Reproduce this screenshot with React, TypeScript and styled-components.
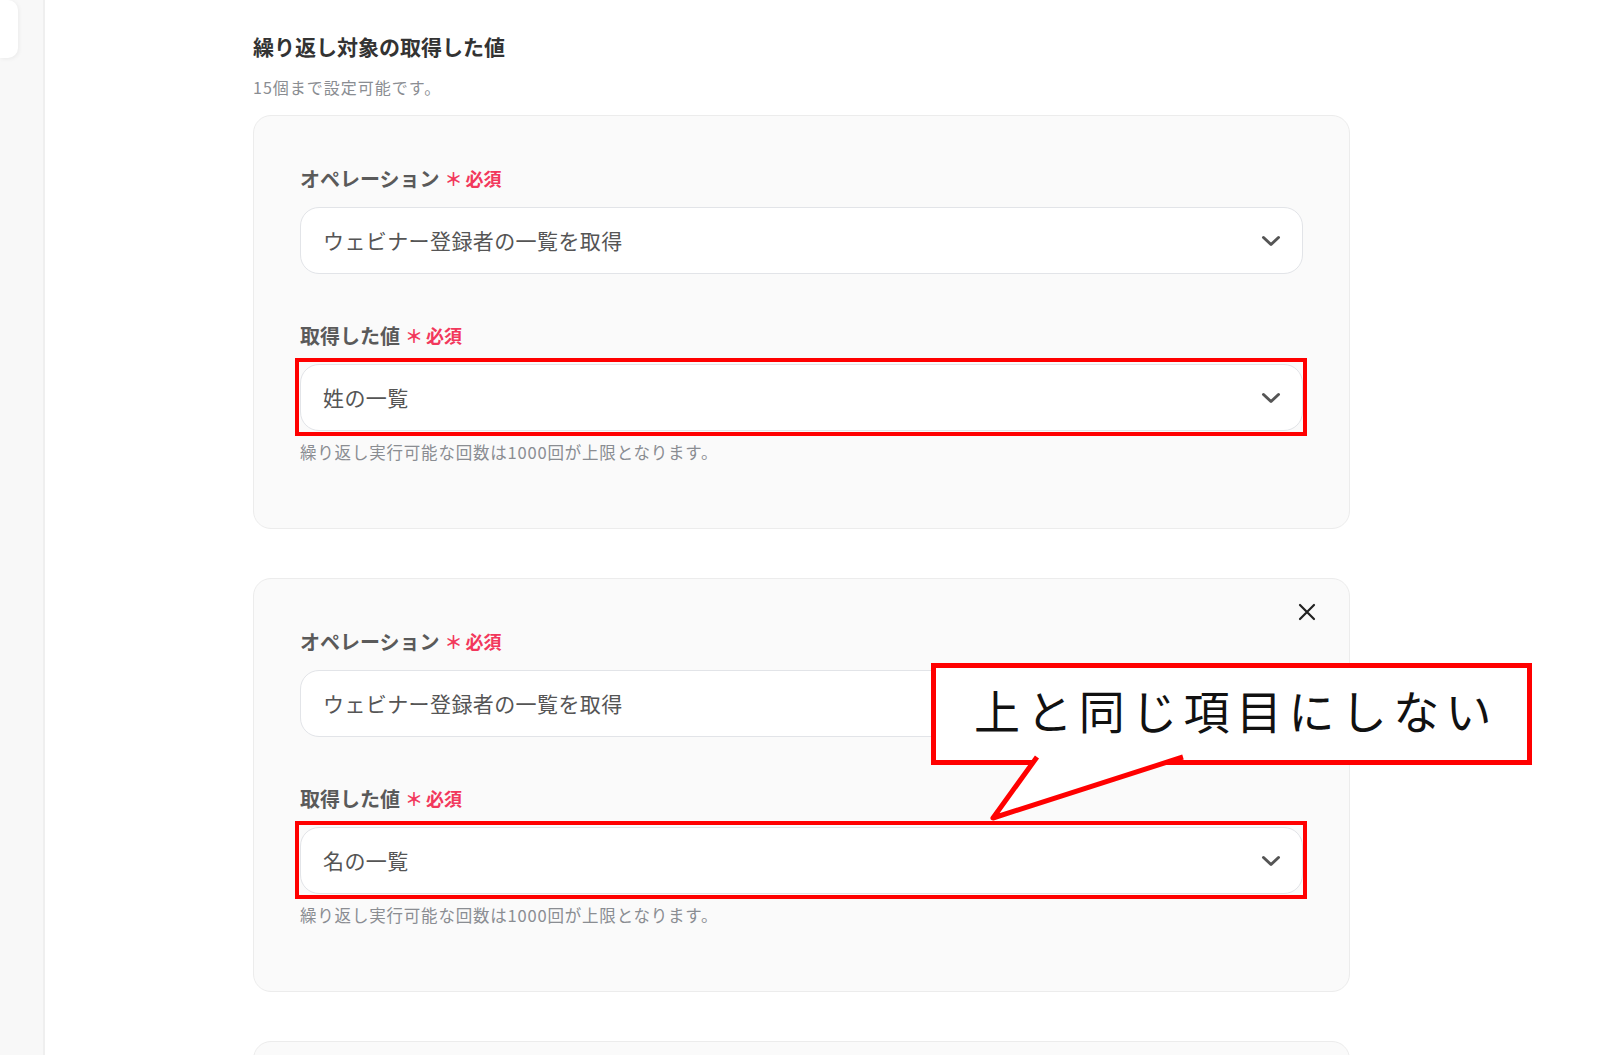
import React from "react";
import styled, { createGlobalStyle } from "styled-components";

const Global = createGlobalStyle`
  html, body { margin: 0; padding: 0; background: #ffffff; overflow: hidden; }
  body { font-family: "Noto Sans CJK JP", "Noto Sans", sans-serif; }
  * { box-sizing: border-box; }
`;

const Page = styled.div`
  display: flex;
  width: 1600px;
  height: 1055px;
  overflow: hidden;
`;

const Sidebar = styled.aside`
  flex: 0 0 45px;
  background: #f8f8f8;
  border-right: 2px solid #efefef;
`;

const SideTab = styled.div`
  width: 18px;
  height: 58px;
  background: #ffffff;
  border-radius: 0 10px 10px 0;
  box-shadow: 1px 1px 4px rgba(0, 0, 0, 0.06);
`;

const Main = styled.main`
  flex: 1;
  padding: 31px 0 0 208px;
  display: flex;
  flex-direction: column;
`;

const Heading = styled.h2`
  margin: 0;
  font-size: 21px;
  line-height: 30px;
  font-weight: 700;
  color: #333333;
`;

const SubText = styled.p`
  margin: 14px 0 16px;
  font-size: 16px;
  line-height: 24px;
  letter-spacing: 1px;
  color: #8a8d92;
`;

const Card = styled.section`
  position: relative;
  width: 1097px;
  background: #fafafa;
  border: 1.5px solid #ececec;
  border-radius: 18px;
  padding: 48px 46px 65px;
  margin-bottom: 49px;
  display: flex;
  flex-direction: column;
`;

const Field = styled.div<{ $first?: boolean }>`
  display: flex;
  flex-direction: column;
  margin-top: ${(p) => (p.$first ? "0" : "47px")};
`;

const Label = styled.div`
  display: flex;
  align-items: center;
  height: 28px;
  margin-bottom: 15px;
  font-size: 20px;
  font-weight: 700;
  color: #5a5a5a;
`;

const Required = styled.span`
  display: inline-flex;
  align-items: center;
  margin-left: 5px;
  color: #f2385c;
  font-size: 18px;
  font-weight: 700;
`;

const Star = styled.span`
  font-size: 18px;
  margin-right: 3px;
`;

const SelectWrap = styled.div<{ $marked?: boolean }>`
  position: relative;
  &::after {
    content: "";
    display: ${(p) => (p.$marked ? "block" : "none")};
    position: absolute;
    top: -6px;
    bottom: -5px;
    left: -5px;
    right: -4px;
    border: 4px solid #ff0000;
    pointer-events: none;
  }
`;

const Select = styled.div`
  height: 67px;
  background: #ffffff;
  border: 1.5px solid #e2e4e8;
  border-radius: 19px;
  display: flex;
  align-items: center;
  justify-content: space-between;
  padding: 0 21px 2px 22px;
  font-size: 21px;
  letter-spacing: 0.4px;
  color: #555555;
`;

const Helper = styled.p`
  margin: 10px 0 0;
  font-size: 16.5px;
  line-height: 22px;
  letter-spacing: 0.8px;
  color: #8a8d92;
`;

const CloseBtn = styled.button`
  position: absolute;
  top: 23px;
  right: 32px;
  width: 20px;
  height: 20px;
  padding: 0;
  border: none;
  background: transparent;
  display: flex;
  align-items: center;
  justify-content: center;
`;

const Callout = styled.div`
  position: absolute;
  left: 677px;
  top: 84px;
  width: 601px;
  height: 102px;
  background: #ffffff;
  border: 5px solid #ff0000;
  display: flex;
  align-items: center;
  padding: 0 0 10px 38px;
  font-family: "Noto Sans CJK JP", sans-serif;
  font-size: 46px;
  font-weight: 400;
  letter-spacing: 6.4px;
  color: #111111;
  z-index: 2;
`;

const Tail = styled.svg`
  position: absolute;
  left: -5px;
  top: calc(100% - 2px);
  overflow: visible;
`;

const Chevron = () => (
  <svg width="20" height="12" viewBox="0 0 20 12" style={{ marginTop: 2 }}>
    <polyline
      points="2.5,2.5 10,9.5 17.5,2.5"
      fill="none"
      stroke="#555"
      strokeWidth="3"
      strokeLinecap="round"
      strokeLinejoin="round"
    />
  </svg>
);

const CloseIcon = () => (
  <svg width="18" height="18" viewBox="0 0 18 18">
    <path d="M2 2 L16 16 M16 2 L2 16" stroke="#222" strokeWidth="2.2" strokeLinecap="round" />
  </svg>
);

const ReqMark = () => (
  <Required>
    <Star>＊</Star>必須
  </Required>
);

type CardProps = {
  value: string;
  closable?: boolean;
  callout?: boolean;
};

const LoopCard: React.FC<CardProps> = ({ value, closable, callout }) => (
  <Card>
    {closable && (
      <CloseBtn aria-label="close">
        <CloseIcon />
      </CloseBtn>
    )}
    <Field $first>
      <Label>
        オペレーション
        <ReqMark />
      </Label>
      <SelectWrap>
        <Select>
          <span>ウェビナー登録者の一覧を取得</span>
          <Chevron />
        </Select>
      </SelectWrap>
    </Field>
    <Field>
      <Label>
        取得した値
        <ReqMark />
      </Label>
      <SelectWrap $marked>
        <Select>
          <span>{value}</span>
          <Chevron />
        </Select>
      </SelectWrap>
      <Helper>繰り返し実行可能な回数は1000回が上限となります。</Helper>
    </Field>
    {callout && (
      <Callout>
        上と同じ項目にしない
        <Tail width="260" height="70">
          <polygon points="106,0 62,60 252,0" fill="#ffffff" />
          <polyline
            points="106,-1 62,60 252,-1"
            fill="none"
            stroke="#ff0000"
            strokeWidth="5"
            strokeLinejoin="round"
          />
        </Tail>
      </Callout>
    )}
  </Card>
);

const EmptyCard = styled(Card)`
  height: 200px;
`;

export default function App() {
  return (
    <>
      <Global />
      <Page>
        <Sidebar>
          <SideTab />
        </Sidebar>
        <Main>
          <Heading>繰り返し対象の取得した値</Heading>
          <SubText>15個まで設定可能です。</SubText>
          <LoopCard value="姓の一覧" />
          <LoopCard value="名の一覧" closable callout />
          <EmptyCard />
        </Main>
      </Page>
    </>
  );
}
